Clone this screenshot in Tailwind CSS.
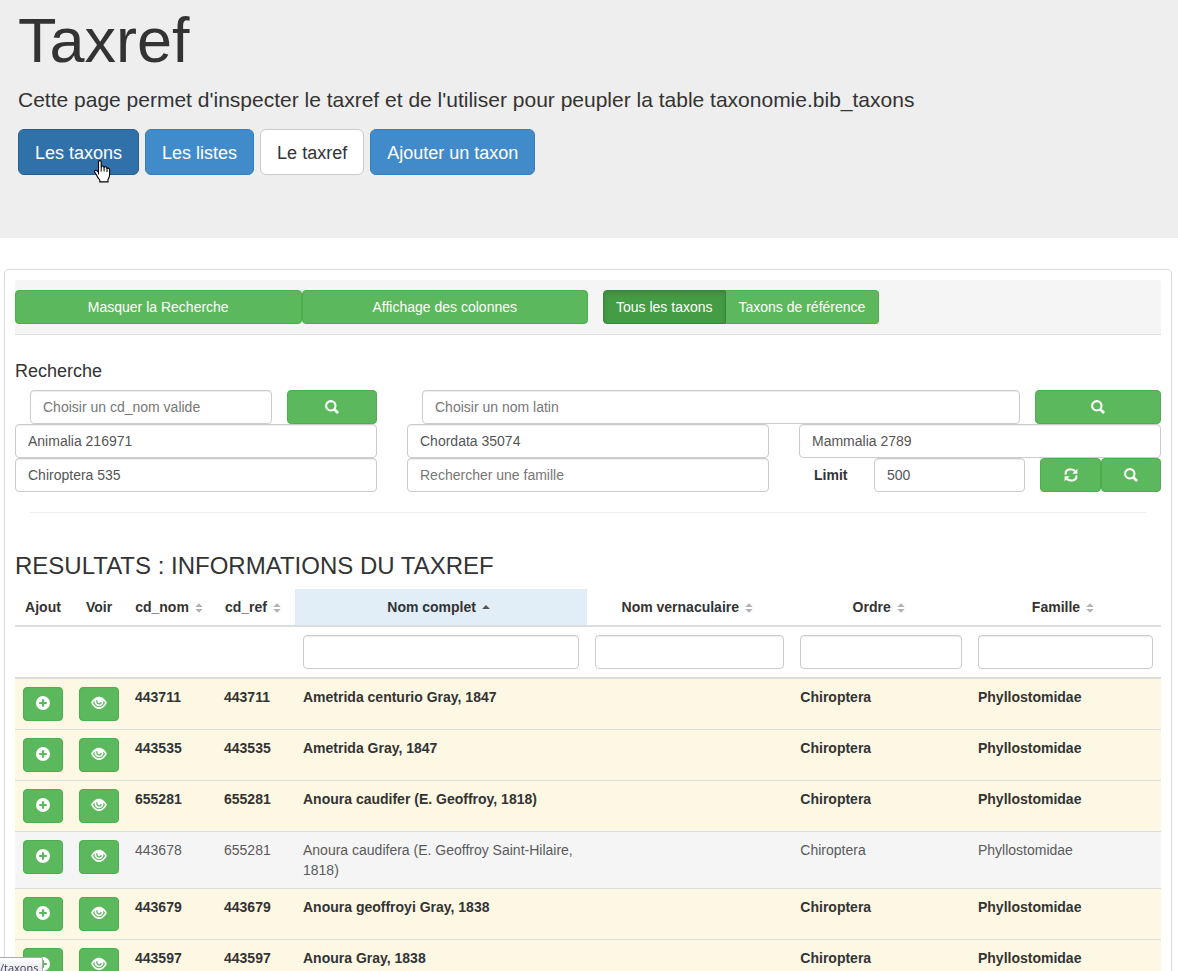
<!DOCTYPE html>
<html lang="fr">
<head>
<meta charset="utf-8">
<meta name="viewport" content="width=device-width, initial-scale=1">
<title>Taxref</title>
<script src="https://cdn.jsdelivr.net/npm/@tailwindcss/browser@4"></script>
</head>
<body class="bg-white font-['Liberation_Sans',Arial,sans-serif] text-sm leading-5 text-[#333]">

<svg class="hidden" aria-hidden="true">
  <symbol id="search" viewBox="0 0 14 14">
    <circle cx="5.8" cy="5.8" r="4.7" fill="none" stroke="currentColor" stroke-width="2.1"/>
    <path d="M9.2 9.2 L13.1 13" fill="none" stroke="currentColor" stroke-width="2.7"/>
  </symbol>
  <symbol id="refresh" viewBox="0 0 14 14">
    <path d="M1.6 6.4 V5.4 A3.800 3.800 0 0 1 5.400 1.500 H7.500 A4.200 4.200 0 0 1 11 3.400" fill="none" stroke="currentColor" stroke-width="2.1"/>
    <path d="M13.400 0.800 V5.800 H8.400 Z" fill="currentColor"/>
    <path d="M12.400 7.600 V8.600 A3.800 3.800 0 0 1 8.600 12.500 H6.500 A4.200 4.200 0 0 1 3 10.600" fill="none" stroke="currentColor" stroke-width="2.1"/>
    <path d="M0.600 13.200 V8.200 H5.600 Z" fill="currentColor"/>
  </symbol>
  <symbol id="plus" viewBox="0 0 14 14">
    <path fill="currentColor" fill-rule="evenodd" d="M7 0a7 7 0 1 0 0 14a7 7 0 1 0 0-14ZM5.900 3.200h2.200v2.700h2.700v2.200H8.100v2.700H5.900V8.100H3.200V5.900h2.700Z"/>
  </symbol>
  <symbol id="eye" viewBox="0 0 16 14">
    <path fill="currentColor" fill-rule="evenodd" d="M8 0.800C4.600 0.800 1.800 3.300 0.100 6.700C1.800 10.400 4.700 13 8 13S14.200 10.400 15.900 6.700C14.200 3.300 11.400 0.800 8 0.800ZM4 4.400C3.600 5.200 3.500 6.200 3.700 7C4.300 9 5.900 10.200 8 10.200S11.700 9 12.300 7C12.500 6.200 12.400 5.200 12 4.400C12.900 5 13.600 5.900 14 6.700C12.700 9.400 10.600 11.300 8 11.300S3.300 9.400 2 6.700C2.400 5.900 3.100 5 4 4.400Z"/>
    <path d="M6 4.300C5.400 6.400 6.500 7.900 8.100 7.900C9.300 7.900 10.100 7 10.100 5.900" fill="none" stroke="#5cb85c" stroke-width="1.300"/>
  </symbol>
  <symbol id="sort" viewBox="0 0 8 10">
    <path d="M4 0.200 L7.800 4 H0.200 Z M0.200 6 H7.800 L4 9.800 Z" fill="#b3b3b3"/>
  </symbol>
  <symbol id="sort-up" viewBox="0 0 8 10">
    <path d="M4 2 L7.900 6 H0.100 Z" fill="#555"/>
  </symbol>
</svg>

<header class="bg-[#eee] px-[18px] pt-[5px] pb-[63px]">
  <h1 class="text-[63px] leading-[70px]">Taxref</h1>
  <p class="mt-2.5 mb-[14px] text-[21px] leading-[30px]">Cette page permet d'inspecter le taxref et de l'utiliser pour peupler la table taxonomie.bib_taxons</p>
  <nav class="flex flex-wrap gap-1.5 text-lg leading-6">
    <a href="#taxons" class="relative rounded-md border border-[#285e8e] bg-[#3071a9] px-4 pt-[11px] pb-[9px] text-white">Les taxons
      <svg class="absolute top-[30px] left-[75px] h-[23px] w-[17px]" viewBox="0 0 17 23" aria-hidden="true">
        <path d="M4.500 14.500 V2 Q4.500 0.600 5.800 0.600 T7.200 2 V7.200 Q7.600 5.800 8.900 6 Q10 6.200 10.100 7.400 Q11 6.400 12.200 7 Q13 7.400 13 8.400 Q14 7.800 15 8.500 Q15.700 9 15.600 10 V15 Q15.400 17.500 14 19.500 V21.900 H5.800 V20 Q3.500 17.500 2.500 15 L0.700 12 Q0.300 10.600 1.500 10.300 Q2.800 10.200 4.500 12.400 Z" fill="#fff" stroke="#000" stroke-width="1.1"/>
        <path d="M7.200 7 V11.500 M10.100 7.400 V11.500 M13 8.400 V12" stroke="#000" fill="none"/>
      </svg></a>
    <a href="#listes" class="rounded-md border border-[#357ebd] bg-[#428bca] px-4 pt-[11px] pb-[9px] text-white">Les listes</a>
    <a href="#taxref" class="rounded-md border border-[#ccc] bg-white px-4 pt-[11px] pb-[9px]">Le taxref</a>
    <a href="#ajouter" class="rounded-md border border-[#357ebd] bg-[#428bca] px-4 pt-[11px] pb-[9px] text-white">Ajouter un taxon</a>
  </nav>
</header>

<main class="mt-[31px] mr-1.5 ml-1 rounded border border-[#ddd] p-2.5 shadow-xs">
  <div class="flex rounded-t-[3px] border-b border-[#ddd] bg-[#f5f5f5] py-2.5 text-white">
    <div class="mr-[15px] flex w-1/2">
      <button class="h-[34px] flex-1 rounded border border-[#4cae4c] bg-[#5cb85c]">Masquer la Recherche</button>
      <button class="h-[34px] flex-1 rounded border border-[#4cae4c] bg-[#5cb85c]">Affichage des colonnes</button>
    </div>
    <button class="h-[34px] rounded-l border border-[#398439] bg-[#449d44] px-3 inset-shadow-[0_3px_5px_rgb(0_0_0/0.125)]">Tous les taxons</button>
    <button class="h-[34px] rounded-r border border-l-0 border-[#4cae4c] bg-[#5cb85c] px-[13px]">Taxons de référence</button>
  </div>

  <form>
    <h2 class="mt-[26px] mb-[9px] text-lg leading-5">Recherche</h2>
    <div class="grid grid-cols-3 gap-x-[30px]">
      <div class="flex gap-[15px] pl-[15px]">
        <input aria-label="cd_nom" placeholder="Choisir un cd_nom valide" class="h-[34px] min-w-0 flex-1 rounded border border-[#ccc] px-3 text-[#555] inset-shadow-[0_1px_1px_rgb(0_0_0/0.075)] placeholder:text-[#777]">
        <button type="button" aria-label="Rechercher le cd_nom" class="flex h-[34px] w-[90px] items-center justify-center rounded border border-[#4cae4c] bg-[#5cb85c] text-white"><svg class="size-3.5"><use href="#search"/></svg></button>
      </div>
      <div class="col-span-2 flex gap-[15px] pl-[15px]">
        <input aria-label="Nom latin" placeholder="Choisir un nom latin" class="h-[34px] min-w-0 flex-1 rounded border border-[#ccc] px-3 text-[#555] inset-shadow-[0_1px_1px_rgb(0_0_0/0.075)] placeholder:text-[#777]">
        <button type="button" aria-label="Rechercher le nom latin" class="flex h-[34px] w-[126px] items-center justify-center rounded border border-[#4cae4c] bg-[#5cb85c] text-white"><svg class="size-3.5"><use href="#search"/></svg></button>
      </div>
      <input aria-label="Règne" value="Animalia 216971" class="h-[34px] min-w-0 rounded border border-[#ccc] px-3 text-[#555] inset-shadow-[0_1px_1px_rgb(0_0_0/0.075)]">
      <input aria-label="Phylum" value="Chordata 35074" class="h-[34px] min-w-0 rounded border border-[#ccc] px-3 text-[#555] inset-shadow-[0_1px_1px_rgb(0_0_0/0.075)]">
      <input aria-label="Classe" value="Mammalia 2789" class="h-[34px] min-w-0 rounded border border-[#ccc] px-3 text-[#555] inset-shadow-[0_1px_1px_rgb(0_0_0/0.075)]">
      <input aria-label="Ordre" value="Chiroptera 535" class="h-[34px] min-w-0 rounded border border-[#ccc] px-3 text-[#555] inset-shadow-[0_1px_1px_rgb(0_0_0/0.075)]">
      <input aria-label="Famille" placeholder="Rechercher une famille" class="h-[34px] min-w-0 rounded border border-[#ccc] px-3 text-[#555] inset-shadow-[0_1px_1px_rgb(0_0_0/0.075)] placeholder:text-[#777]">
      <div class="flex items-center pl-[15px]">
        <label for="limit" class="w-[60px] font-bold">Limit</label>
        <input id="limit" value="500" class="mr-[15px] h-[34px] min-w-0 flex-1 rounded border border-[#ccc] px-3 text-[#555] inset-shadow-[0_1px_1px_rgb(0_0_0/0.075)]">
        <button type="button" aria-label="Réinitialiser" class="flex h-[34px] w-[61px] items-center justify-center rounded border border-[#4cae4c] bg-[#5cb85c] text-white"><svg class="size-3.5"><use href="#refresh"/></svg></button>
        <button type="button" aria-label="Rechercher" class="flex h-[34px] w-[60px] items-center justify-center rounded border border-[#4cae4c] bg-[#5cb85c] text-white"><svg class="size-3.5"><use href="#search"/></svg></button>
      </div>
    </div>
  </form>
  <hr class="mx-[15px] mt-5 border-[#eee]">

  <h2 class="mt-10 mb-2.5 text-2xl leading-[26px]">RESULTATS : INFORMATIONS DU TAXREF</h2>
  <table class="w-full table-fixed border-separate border-spacing-0">
    <colgroup>
      <col class="w-[56px]"><col class="w-[56px]"><col class="w-[89px]"><col class="w-[79px]">
      <col class="w-[25.5%]"><col class="w-[17.9%]"><col class="w-[15.5%]"><col>
    </colgroup>
    <thead class="[&_th]:whitespace-nowrap [&_th]:border-b-2 [&_th]:border-[#ddd] [&_th]:py-2 [&_td]:border-b-2 [&_td]:border-[#ddd] [&_td]:p-2 [&_svg]:mr-[5px] [&_svg]:ml-1.5 [&_svg]:inline-block [&_svg]:h-2.5 [&_svg]:w-2 [&_svg]:align-[-1px]">
      <tr>
        <th>Ajout</th>
        <th>Voir</th>
        <th>cd_nom<svg><use href="#sort"/></svg></th>
        <th>cd_ref<svg><use href="#sort"/></svg></th>
        <th class="bg-[#e1eef7] bg-clip-padding">Nom complet<svg><use href="#sort-up"/></svg></th>
        <th>Nom vernaculaire<svg><use href="#sort"/></svg></th>
        <th>Ordre<svg><use href="#sort"/></svg></th>
        <th>Famille<svg><use href="#sort"/></svg></th>
      </tr>
      <tr>
        <td></td><td></td><td></td><td></td>
        <td><input aria-label="Filtrer par nom complet" class="block h-[34px] w-full rounded border border-[#ccc] px-3 inset-shadow-[0_1px_1px_rgb(0_0_0/0.075)]"></td>
        <td><input aria-label="Filtrer par nom vernaculaire" class="block h-[34px] w-full rounded border border-[#ccc] px-3 inset-shadow-[0_1px_1px_rgb(0_0_0/0.075)]"></td>
        <td><input aria-label="Filtrer par ordre" class="block h-[34px] w-full rounded border border-[#ccc] px-3 inset-shadow-[0_1px_1px_rgb(0_0_0/0.075)]"></td>
        <td><input aria-label="Filtrer par famille" class="block h-[34px] w-full rounded border border-[#ccc] px-3 inset-shadow-[0_1px_1px_rgb(0_0_0/0.075)]"></td>
      </tr>
    </thead>
    <tbody class="[&_td]:border-t [&_td]:border-[#ddd] [&_td]:p-2 [&_td]:align-top [&>tr:first-child>td]:border-t-0 [&_button]:flex [&_button]:h-[34px] [&_button]:w-10 [&_button]:items-center [&_button]:justify-center [&_button]:rounded [&_button]:border [&_button]:border-[#4cae4c] [&_button]:bg-[#5cb85c] [&_button]:pb-0.5 [&_button]:text-white">
      <tr class="bg-[#fcf8e3] font-bold">
        <td><button aria-label="Ajouter"><svg class="size-3.5"><use href="#plus"/></svg></button></td>
        <td><button aria-label="Voir"><svg class="h-3.5 w-4"><use href="#eye"/></svg></button></td>
        <td>443711</td><td>443711</td><td>Ametrida centurio Gray, 1847</td><td></td><td>Chiroptera</td><td>Phyllostomidae</td>
      </tr>
      <tr class="bg-[#fcf8e3] font-bold">
        <td><button aria-label="Ajouter"><svg class="size-3.5"><use href="#plus"/></svg></button></td>
        <td><button aria-label="Voir"><svg class="h-3.5 w-4"><use href="#eye"/></svg></button></td>
        <td>443535</td><td>443535</td><td>Ametrida Gray, 1847</td><td></td><td>Chiroptera</td><td>Phyllostomidae</td>
      </tr>
      <tr class="bg-[#fcf8e3] font-bold">
        <td><button aria-label="Ajouter"><svg class="size-3.5"><use href="#plus"/></svg></button></td>
        <td><button aria-label="Voir"><svg class="h-3.5 w-4"><use href="#eye"/></svg></button></td>
        <td>655281</td><td>655281</td><td>Anoura caudifer (E. Geoffroy, 1818)</td><td></td><td>Chiroptera</td><td>Phyllostomidae</td>
      </tr>
      <tr class="bg-[#f5f5f5] text-[#5a5a5a]">
        <td><button aria-label="Ajouter"><svg class="size-3.5"><use href="#plus"/></svg></button></td>
        <td><button aria-label="Voir"><svg class="h-3.5 w-4"><use href="#eye"/></svg></button></td>
        <td>443678</td><td>655281</td><td>Anoura caudifera (E. Geoffroy Saint-Hilaire, 1818)</td><td></td><td>Chiroptera</td><td>Phyllostomidae</td>
      </tr>
      <tr class="bg-[#fcf8e3] font-bold">
        <td><button aria-label="Ajouter"><svg class="size-3.5"><use href="#plus"/></svg></button></td>
        <td><button aria-label="Voir"><svg class="h-3.5 w-4"><use href="#eye"/></svg></button></td>
        <td>443679</td><td>443679</td><td>Anoura geoffroyi Gray, 1838</td><td></td><td>Chiroptera</td><td>Phyllostomidae</td>
      </tr>
      <tr class="bg-[#fcf8e3] font-bold">
        <td><button aria-label="Ajouter"><svg class="size-3.5"><use href="#plus"/></svg></button></td>
        <td><button aria-label="Voir"><svg class="h-3.5 w-4"><use href="#eye"/></svg></button></td>
        <td>443597</td><td>443597</td><td>Anoura Gray, 1838</td><td></td><td>Chiroptera</td><td>Phyllostomidae</td>
      </tr>
    </tbody>
  </table>
</main>

<div class="fixed bottom-0 left-0 h-3.5 rounded-tr-xs border-t border-r border-[#aaa] bg-linear-to-b from-white to-[#e4e5f0] pt-[3px] pr-1 font-['Open_Sans',sans-serif] text-[11px] leading-[14px] text-[#444]">/taxons</div>
</body>
</html>
